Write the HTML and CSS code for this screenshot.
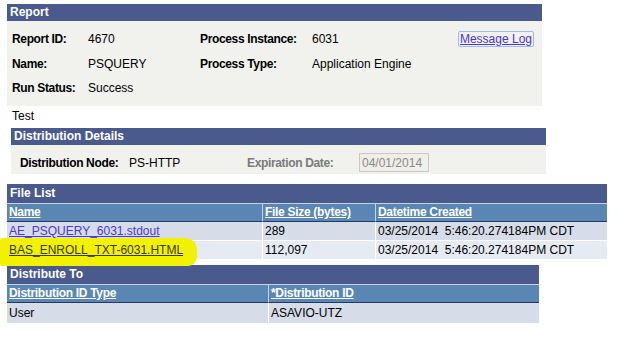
FILE: index.html
```html
<!DOCTYPE html>
<html lang="en">
<head>
    <meta charset="UTF-8">
    <title>Report Detail</title>
    <link rel="stylesheet" href="styles.css">
</head>
<body>
<div class="page">

    <div class="panel report">
        <div class="bar">Report</div>
        <div class="report-body">
            <span class="label">Report ID:</span>
            <span>4670</span>
            <span class="label">Process Instance:</span>
            <span>6031</span>
            <a class="msg-log" href="#">Message Log</a>

            <span class="label">Name:</span>
            <span>PSQUERY</span>
            <span class="label">Process Type:</span>
            <span>Application Engine</span>
            <span></span>

            <span class="label">Run Status:</span>
            <span>Success</span>
        </div>
    </div>

    <div class="note">Test</div>

    <div class="panel dist">
        <div class="bar">Distribution Details</div>
        <div class="dist-body">
            <span class="label node-label">Distribution Node:</span>
            <span class="node-value">PS-HTTP</span>
            <span class="label muted exp-label">Expiration Date:</span>
            <input class="exp-input" type="text" value="04/01/2014" disabled>
        </div>
    </div>

    <div class="grid files">
        <div class="bar tall">File List</div>
        <table>
            <tr>
                <th class="col-name"><a href="#">Name</a></th>
                <th class="col-size"><a href="#">File Size (bytes)</a></th>
                <th class="col-date"><a href="#">Datetime Created</a></th>
            </tr>
            <tr class="odd">
                <td><a href="#">AE_PSQUERY_6031.stdout</a></td>
                <td>289</td>
                <td>03/25/2014&nbsp; 5:46:20.274184PM CDT</td>
            </tr>
            <tr class="even">
                <td><a class="marked" href="#">BAS_ENROLL_TXT-6031.HTML</a></td>
                <td>112,097</td>
                <td>03/25/2014&nbsp; 5:46:20.274184PM CDT</td>
            </tr>
        </table>
    </div>

    <div class="grid dest">
        <div class="bar tall">Distribute To</div>
        <table>
            <tr>
                <th class="col-type"><a href="#">Distribution ID Type</a></th>
                <th><a href="#">*Distribution ID</a></th>
            </tr>
            <tr class="odd">
                <td>User</td>
                <td>ASAVIO-UTZ</td>
            </tr>
        </table>
    </div>

    <!-- marker highlight drawn over the screenshot -->
    <div class="highlight"></div>
</div>
</body>
</html>
```

FILE: styles.css
```css
body {
    margin: 0;
    font-family: "Liberation Sans", Arial, sans-serif;
    font-size: 12px;
    color: #000;
    background-color: #fff;
}

.page {
    position: relative;
    padding: 4px 0 0 7px;
}

.bar {
    background-color: #4a5a8c;
    color: #fff;
    font-weight: bold;
    height: 17px;
    line-height: 17px;
    padding-left: 3px;
}

.bar.tall {
    height: 19px;
    line-height: 19px;
}

.label {
    font-weight: bold;
    letter-spacing: -0.35px;
}

.muted {
    color: #7a7a7a;
}

.panel {
    background-color: #f1f2ee;
}

/* Report */
.report {
    width: 535px;
}

.report-body {
    display: grid;
    grid-template-columns: 76px 112px 112px 1fr auto;
    row-gap: 10px;
    line-height: 14px;
    padding: 11px 8px 11px 5px;
}

.msg-log {
    justify-self: end;
    color: #4b36d6;
    border: 1px solid #9cbcf2;
    border-radius: 2px;
    padding: 0 1px;
    margin-top: -1px;
}

.note {
    padding: 3px 0 5px 5px;
    line-height: 14px;
}

/* Distribution details */
.dist {
    width: 535px;
    margin-left: 4px;
}

.dist-body {
    display: flex;
    align-items: center;
    padding: 8px 0 2px 9px;
}

.node-label {
    width: 109px;
}

.node-value {
    width: 118px;
}

.exp-label {
    width: 112px;
}

.exp-input {
    width: 70px;
    height: 19px;
    box-sizing: border-box;
    border: 1px solid #c9c9c2;
    background-color: #efeee9;
    color: #8a8a8a;
    font-family: "Liberation Sans", Arial, sans-serif;
    font-size: 12px;
    padding: 0 0 0 2px;
    margin: 0;
}

/* Grids */
.grid {
    margin-top: 10px;
}

.grid table {
    border-collapse: separate;
    border-spacing: 0;
    width: 100%;
}

.grid th {
    background-color: #5a86b4;
    text-align: left;
    font-weight: bold;
    letter-spacing: -0.3px;
    line-height: 17px;
    padding: 0 2px;
    border-top: 1px solid #c4d3e8;
    border-right: 1px solid #c4d3e8;
    border-bottom: 1px solid #24386a;
}

.grid th:last-child {
    border-right: none;
}

.grid th a {
    color: #fff;
}

.grid td {
    line-height: 18px;
    padding: 0 2px;
    border-right: 1px solid #fff;
    border-bottom: 1px solid #fff;
    white-space: nowrap;
}

.grid td:last-child {
    border-right: none;
}

.grid td a {
    color: #4b36d6;
}

.odd td {
    background-color: #d6dce8;
}

.even td {
    background-color: #e6ebf3;
}

.files {
    width: 600px;
}

.col-name {
    width: 251px;
}

.col-size {
    width: 108px;
}

.dest {
    width: 532px;
    margin-top: 5px;
}

.dest td {
    line-height: 20px;
}

.col-type {
    width: 257px;
}

.grid td a.marked {
    position: relative;
    z-index: 2;
    color: #3a3812;
}

.highlight {
    position: absolute;
    left: 0;
    top: 238px;
    width: 197px;
    height: 28px;
    background-color: #f2f200;
    border-radius: 3px 12px 9px 2px;
    z-index: 1;
}
```
